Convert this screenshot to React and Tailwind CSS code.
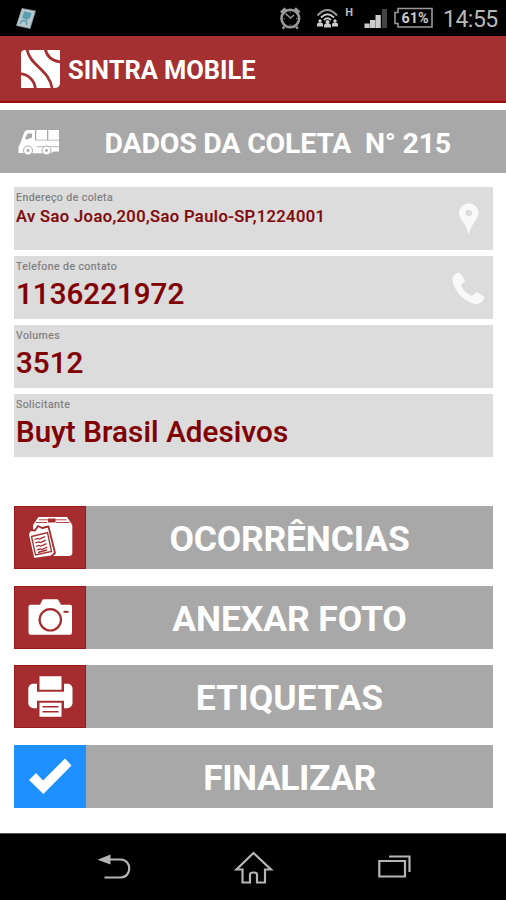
import React from "react";

function StatusBar() {
  return (
    <header className="flex h-9 shrink-0 items-center bg-black text-[#b8b8b8]">
      <svg className="h-9 w-[270px] shrink-0" viewBox="0 0 270 36">
        <path d="M22 8.500 L35.500 11 L30 28.500 L16.500 25.500 Z" fill="#b9c8cd" stroke="#8f9da0" strokeWidth="0.800" />
        <path d="M24 11.500 L31.500 13 L30 18 L27 20 L22 18 Z" fill="#5b9eb3" />
        <path d="M20 24 L22 20.500 L26 21 L27 25" fill="none" stroke="#5b9eb3" strokeWidth="1.500" />
      </svg>
      <svg className="h-9 w-[173px] shrink-0" viewBox="270 0 173 36" fill="none" stroke="#999">
        <circle cx="290.300" cy="18.500" r="8.800" strokeWidth="2.600" />
        <path d="M285.500 13.500 L290.500 18 L294 15" strokeWidth="1.500" />
        <path d="M281 12.500 L285.500 8.300 M295 8.300 L299.500 12.500 M284.500 27 L282.500 28.500 M296 27 L298 28.500" strokeWidth="2.600" />
        <path d="M290.300 11.500 v1 M283.500 18.500 h1 M296 18.500 h1 M290.300 24.500 v1" strokeWidth="1" />
        <path d="M317.500 15.500 Q327.500 4.500 337 15.500" stroke="#999" strokeWidth="2" />
        <path d="M321 17.500 Q327.500 11 334 17.500" stroke="#ccc" strokeWidth="2" />
        <path d="M324 20 Q327.500 16.500 331 20" stroke="#ccc" strokeWidth="1.800" />
        <g fill="#ccc" stroke="none">
          <circle cx="327.500" cy="22" r="2" /><path d="M324 27.500 v-1.500 q0-2.800 3.500-2.800 t3.500 2.800 v1.500 z" />
          <circle cx="320" cy="21" r="1.700" /><path d="M317 26.500 v-1.700 q0-2.300 3-2.300 t3 2.300 v1.700 z" />
          <circle cx="335" cy="21" r="1.700" /><path d="M332 26.500 v-1.700 q0-2.300 3-2.300 t3 2.300 v1.700 z" />
          <path d="M364.500 23.500 h5.200 v4.500 h-5.200 z M370 20 h5.200 v8 h-5.200 z M375.500 15 h5.300 v13 H375.500 z" />
          <path d="M382 9 h5 v19 h-5 z" fill="#444" />
        </g>
        <text x="345.300" y="16.300" fill="#bbb" stroke="none" className="font-['Roboto'] text-[11px] font-bold">H</text>
        <path d="M398 8.500 H432 V27 H398 V23.500 H395 V12.500 H398 Z" stroke="#999" strokeWidth="1.600" />
        <text x="401.500" y="23" fill="#ccc" stroke="none" className="font-['Roboto'] text-[14px] font-bold" textLength="27" lengthAdjust="spacingAndGlyphs">61%</text>
      </svg>
      <span className="pt-0.5 text-[23px] leading-none tracking-[-0.500px]">14:55</span>
    </header>
  );
}

function Logo() {
  return (
    <svg className="h-10 w-10 shrink-0" viewBox="20 49 40 40">
      <path d="M21 54 Q21 50 25 50 H60 V83 Q60 88 54 88 H21 Z" fill="#fff" />
      <g fill="none" stroke="#a53032" strokeWidth="2.800">
        <path d="M26.800 48 C29 66 50 69 52.500 90" />
        <path d="M45 48 C46.500 56 51 61.500 62 62" />
        <path d="M19 73.500 C28 74 35 80 35.500 90" />
      </g>
    </svg>
  );
}

function TruckIcon() {
  return (
    <svg className="h-7 w-11 shrink-0" viewBox="17 127 44 28">
      <path d="M18.500 152 V146 L20.500 142 L24 132 Q25 129 28 129 H35 V139.500 H59 V150.500 H54 L50 152.500 Z" fill="#fff" />
      <path d="M36.300 129 H47 V138.700 H36.300 Z M48.300 129 H59 V138.700 H48.300 Z" fill="#fff" />
      <path d="M25 138 L27 133.500 Q27.300 132.500 28.500 132.500 H32 V136.500 L27 138.500 Z" fill="#a8a8a8" />
      <path d="M36.500 145.700 H59" stroke="#b8b8b8" strokeWidth="1" />
      <g fill="#fff" stroke="#a8a8a8" strokeWidth="1"><circle cx="28" cy="149.500" r="4.500" /><circle cx="46.500" cy="149.500" r="4.500" /></g>
      <g fill="#a8a8a8"><circle cx="28" cy="149.500" r="1.400" /><circle cx="46.500" cy="149.500" r="1.400" /></g>
    </svg>
  );
}

function PinIcon() {
  return (
    <svg className="h-[63px] w-12" viewBox="445 187 48 63">
      <path fillRule="evenodd" fill="#f9f9f9" d="M468.700 203.500 C463 203.500 459 208 459 213 C459 219 466 223 468.700 235 C471.500 223 478.500 219 478.500 213 C478.500 208 474.500 203.500 468.700 203.500 Z M468.700 209.700 a3.300 3.300 0 1 1 0 6.600 a3.300 3.300 0 1 1 0 -6.600 Z" />
    </svg>
  );
}

function PhoneIcon() {
  return (
    <svg className="h-[63px] w-12" viewBox="445 256.300 48 63">
      <path fill="#f9f9f9" d="M454 275.500 Q457.500 272.500 459.500 273.300 Q462 275 464.500 279.500 Q465.500 281.500 464 282.500 L461 284.800 C462 290 467 294.500 472 296 L475 293.500 Q476.500 292 478 293 L483.500 296.500 Q485 298 483 301 Q480 304.500 476 304.300 C465 303 453 291 452.500 279 Q452.500 277 454 275.500 Z" />
    </svg>
  );
}

function Field({ label, value, small, icon, tracking }) {
  return (
    <div className="flex h-[63px] justify-between overflow-hidden bg-[#dcdcdc] pl-0.5">
      <div className="whitespace-nowrap">
        <div className="pt-[5px] text-[10.500px] leading-[12px] tracking-[0.440px] text-[#7c7c7c] [-webkit-text-stroke:0.200px_#7c7c7c]">{label}</div>
        <div className={small
          ? "pt-[3px] text-[16.500px] font-medium leading-5 tracking-[0.410px] text-[#800a0c] [-webkit-text-stroke:0.200px_#800a0c]"
          : "pt-1 text-[29.500px] font-medium leading-[34px] text-[#800002] [-webkit-text-stroke:0.200px_#800002] " + tracking}>{value}</div>
      </div>
      {icon}
    </div>
  );
}

function BoxIcon() {
  return (
    <svg className="h-[63px] w-[72px]" viewBox="14 506 72 63">
      <path d="M33 525 L38.500 517 H67 L72.300 525 V553 Q72 556 69 556 H52 L33 550 Z" fill="#fff" />
      <path d="M39 519.800 H66.500 M36 522.500 H47 M56 522.500 H69.500" stroke="#a52d2f" strokeWidth="0.900" />
      <path d="M48 518.500 h7.500 v4 h-7.500 z" fill="#a52d2f" />
      <path d="M28 534 L30 530 L35 530.500 L38 526 L42 528 L48.500 526.500 L55 553 L51 556.500 L33.500 559 Z" fill="#fff" stroke="#a52d2f" strokeWidth="1.800" strokeLinejoin="round" />
      <path d="M31.500 536.500 L47.500 532.500 L51.500 551.500 L35.500 555 Z" fill="none" stroke="#a52d2f" strokeWidth="1.300" />
      <path d="M34.500 539.500 l3-1 2 .6 5.500-2.500 M35.300 543 l3-1 2 .6 5.500-2.500 M36 546.500 l3-1 2 .6 5.500-2.500 M36.800 550 l3-1 2 .6 5.500-2.500 M38 552.500 l9-2.500" stroke="#a52d2f" strokeWidth="1.300" fill="none" />
    </svg>
  );
}

function CameraIcon() {
  return (
    <svg className="h-[63px] w-[72px]" viewBox="14 585.700 72 63">
      <path fill="#fff" d="M30.500 604.500 H40 L42.500 599.500 Q43 599 44 599 H57 Q58 599 58.500 600 L61 604.500 H70 Q72 604.500 72 606.500 V632 Q72 634.500 70 634.500 H30.500 Q28.500 634.500 28.500 632 V606.500 Q28.500 604.500 30.500 604.500 Z" />
      <circle cx="50.300" cy="619.500" r="10.700" fill="none" stroke="#a52d2f" strokeWidth="2.200" />
      <path d="M63.500 611.500 H68.500" stroke="#a52d2f" strokeWidth="2" />
    </svg>
  );
}

function PrinterIcon() {
  return (
    <svg className="h-[63px] w-[72px]" viewBox="14 665.300 72 63">
      <path d="M32 684 H37 V692 H64 V684 H69 Q72 685.500 72.500 688 V704 Q71.500 707.500 68 708.500 H64 V701 H37 V708.500 H33 Q29 707.500 28.300 704 V688 Q29 685 32 684 Z" fill="#fff" />
      <path d="M39.500 676.500 H61.500 V690 H39.500 Z M39.500 703 H61.500 V717 H39.500 Z" fill="#fff" />
      <path d="M42.500 707 H58.500 M42.500 712 H58.500" stroke="#a52d2f" strokeWidth="1.600" />
    </svg>
  );
}

function CheckIcon() {
  return (
    <svg className="h-[63px] w-[72px]" viewBox="14 745 72 63">
      <path d="M29 780 L36 773 L43 780.500 L65 758.500 L71.500 765.500 L43.300 794 Z" fill="#fff" />
    </svg>
  );
}

function ActionButton({ label, icon, blue, tracking }) {
  return (
    <button className="flex h-[63px] w-full shrink-0 bg-[#a8a8a8] text-left">
      <span className={blue ? "h-[63px] w-[72px] shrink-0 bg-[#1e90ff]" : "h-[63px] w-[72px] shrink-0 border border-[#9c1a1c] bg-[#a52d2f]"}>
        <span className={blue ? "block" : "-m-px block"}>{icon}</span>
      </span>
      <span className={"flex-1 whitespace-nowrap pt-[2px] text-center text-[35.500px] font-bold leading-[62px] text-white " + tracking}>{label}</span>
    </button>
  );
}

function NavBar() {
  return (
    <nav className="h-[67px] shrink-0 border-t border-[#555] bg-black">
      <svg className="h-[66px] w-full" viewBox="0 834 506 66" fill="none" stroke="#b5b5b5" strokeWidth="2.200">
        <path d="M108 859.500 H121 C132 860 132 877 121 877.500 H104.500" />
        <path d="M97.500 859.800 L110.500 854.500 V864.500 Z" fill="#b5b5b5" stroke="none" />
        <path d="M253.500 853 L236.500 869.500 H242.500 V882.500 H250 V874.500 Q250 872.500 253.500 872.500 Q257 872.500 257 874.500 V882.500 H265 V869.500 H271 Z" />
        <path d="M379.300 861 H405 V876.500 H379.300 Z M389 856.500 H409.500 V872" />
      </svg>
    </nav>
  );
}

export default function App() {
  return (
    <div className="flex h-[900px] w-[506px] flex-col overflow-hidden bg-white font-['Roboto',sans-serif]">
      <StatusBar />
      <div className="flex h-[67px] shrink-0 items-center border-b-2 border-[#a00b0e] bg-[#a53032] pl-5">
        <Logo />
        <h1 className="ml-2 pt-1 text-[25.500px] font-bold leading-none tracking-[-0.050px] text-white">SINTRA MOBILE</h1>
      </div>
      <div className="mt-[7px] flex h-[63px] shrink-0 items-center bg-[#a8a8a8] pl-[17px]">
        <TruckIcon />
        <h2 className="ml-[43.500px] whitespace-pre pt-[5px] text-[28.500px] font-bold leading-none tracking-[-0.220px] text-white">DADOS DA COLETA  N° 215</h2>
      </div>
      <section className="ml-3.5 mr-[13px] mt-3.5 flex shrink-0 flex-col gap-1.5">
        <Field label="Endereço de coleta" value="Av Sao Joao,200,Sao Paulo-SP,1224001" small icon={<PinIcon />} />
        <Field label="Telefone de contato" value="1136221972" icon={<PhoneIcon />} tracking="tracking-[0.060px]" />
        <Field label="Volumes" value="3512" tracking="tracking-[0.060px]" />
        <Field label="Solicitante" value="Buyt Brasil Adesivos" tracking="tracking-[0.130px]" />
      </section>
      <section className="ml-3.5 mr-[13px] mt-[49px] flex h-[302px] shrink-0 flex-col justify-between">
        <ActionButton label="OCORRÊNCIAS" icon={<BoxIcon />} tracking="tracking-[-0.200px]" />
        <ActionButton label="ANEXAR FOTO" icon={<CameraIcon />} tracking="tracking-[-0.100px]" />
        <ActionButton label="ETIQUETAS" icon={<PrinterIcon />} tracking="tracking-[0.100px]" />
        <ActionButton label="FINALIZAR" icon={<CheckIcon />} blue tracking="tracking-[-0.500px]" />
      </section>
      <div className="flex-1" />
      <NavBar />
    </div>
  );
}
